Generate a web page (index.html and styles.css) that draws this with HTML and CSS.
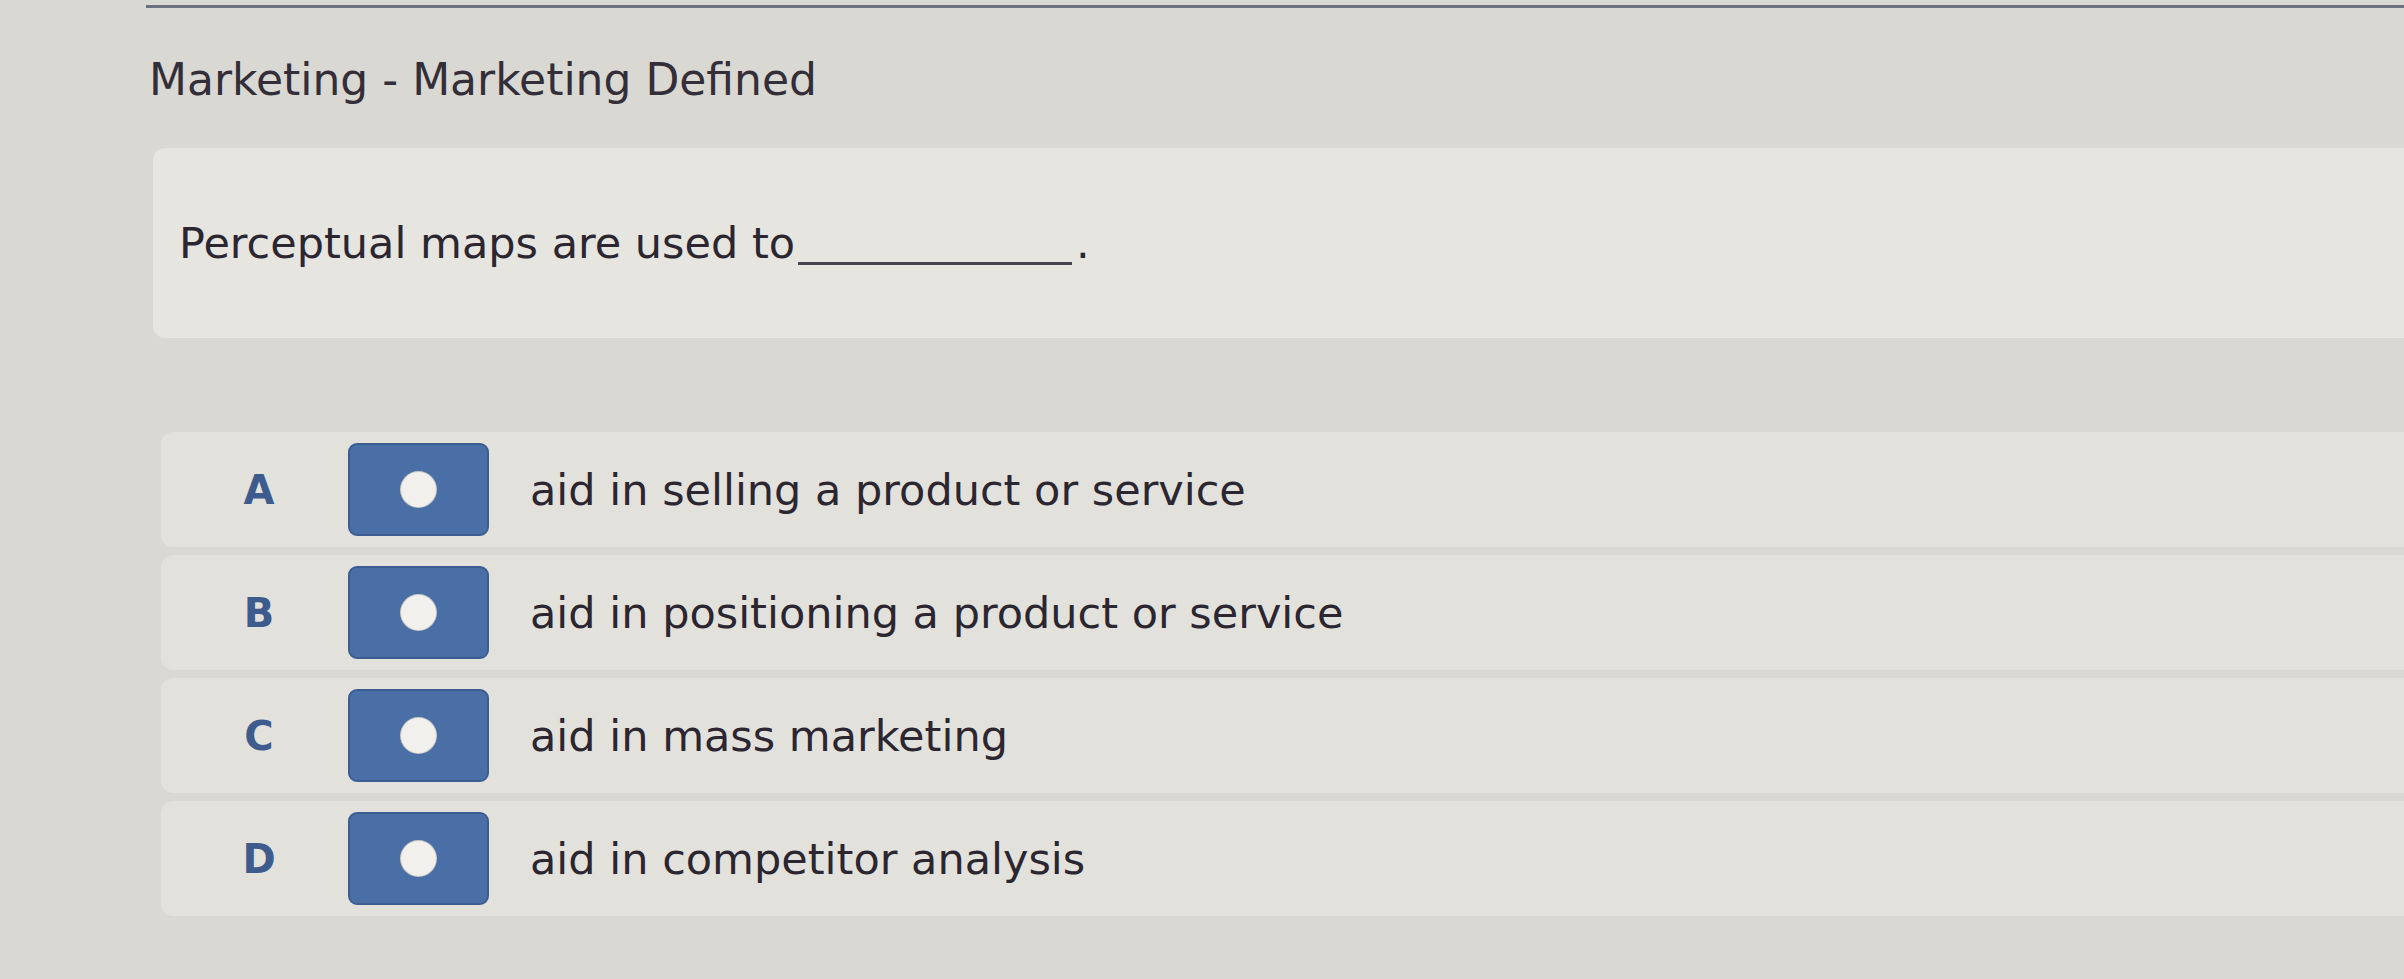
FILE: index.html
```html
<!DOCTYPE html>
<html lang="en">
<head>
<meta charset="utf-8">
<title>Marketing - Marketing Defined</title>
<link rel="stylesheet" href="styles.css">
</head>
<body>
<div class="page">
  <div class="rule"></div>
  <h1 class="title">Marketing - Marketing Defined</h1>
  <div class="question">
    <p class="stem">Perceptual maps are used to<span class="blank"></span>.</p>
  </div>
  <ul class="options">
    <li class="option">
      <span class="letter">A</span>
      <span class="radio"><span class="dot"></span></span>
      <span class="label">aid in selling a product or service</span>
    </li>
    <li class="option">
      <span class="letter">B</span>
      <span class="radio"><span class="dot"></span></span>
      <span class="label">aid in positioning a product or service</span>
    </li>
    <li class="option">
      <span class="letter">C</span>
      <span class="radio"><span class="dot"></span></span>
      <span class="label">aid in mass marketing</span>
    </li>
    <li class="option">
      <span class="letter">D</span>
      <span class="radio"><span class="dot"></span></span>
      <span class="label">aid in competitor analysis</span>
    </li>
  </ul>
</div>
</body>
</html>
```

FILE: styles.css
```css
html, body {
  margin: 0;
  padding: 0;
}
body {
  background: #d9d8d3;
  font-family: "DejaVu Sans", Verdana, sans-serif;
  color: #2b2630;
  width: 2404px;
  height: 979px;
  overflow: hidden;
}
.page {
  padding-left: 146px;
  padding-top: 5px;
}
.rule {
  height: 3px;
  background: #6c7180;
}
.title {
  margin: 44px 0 0 3px;
  font-size: 44px;
  font-weight: normal;
  line-height: 56px;
  color: #332e38;
}
.question {
  margin: 40px 0 0 7px;
  height: 190px;
  background: #e6e5e0;
  border-radius: 12px 0 0 12px;
  display: flex;
  align-items: center;
  padding-left: 26px;
}
.stem {
  margin: 0;
  font-size: 43px;
  line-height: 52px;
  color: #2b2630;
}
.blank {
  display: inline-block;
  width: 274px;
  height: 3px;
  background: #4a4450;
  margin-left: 3px;
  margin-right: 4px;
  vertical-align: -7px;
}
.options {
  list-style: none;
  margin: 94px 0 0 15px;
  padding: 0;
  display: flex;
  flex-direction: column;
  gap: 8px;
}
.option {
  height: 115px;
  background: #e2e1dc;
  border-radius: 12px 0 0 12px;
  display: flex;
  align-items: center;
}
.letter {
  width: 178px;
  margin-left: 9px;
  text-align: center;
  font-weight: bold;
  font-size: 40px;
  color: #3d5b8c;
}
.radio {
  width: 141px;
  height: 93px;
  box-sizing: border-box;
  background: #4a6fa6;
  border: 2px solid #3b5d92;
  border-radius: 9px;
  display: flex;
  align-items: center;
  justify-content: center;
}
.dot {
  width: 35px;
  height: 35px;
  border-radius: 50%;
  background: #f1f0ec;
  box-shadow: 0 0 0 1px #c9c8c4;
}
.label {
  margin-left: 41px;
  font-size: 43px;
  color: #2b2630;
}
```
